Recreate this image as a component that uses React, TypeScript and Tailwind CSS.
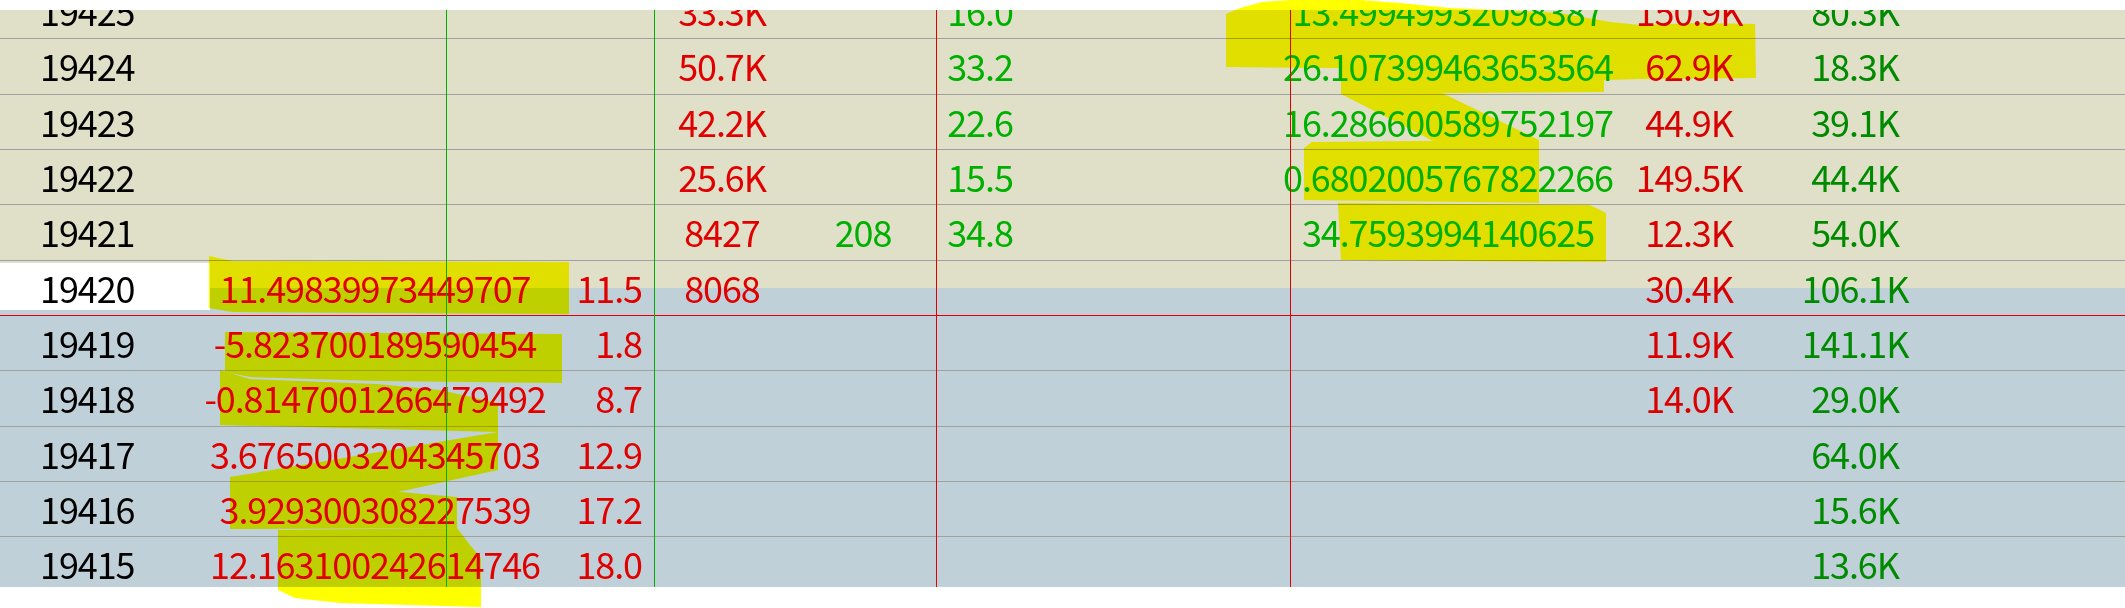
type Level = {
  n: number;
  c2?: string;
  c3?: string;
  c4?: string;
  c5?: string;
  c6?: string;
  c7?: string;
  c8?: string;
  c9?: string;
};

const LEVELS: Level[] = [
  { n: 19425, c4: "33.3K", c6: "16.0", c7: "13.49949932098387", c8: "150.9K", c9: "80.3K" },
  { n: 19424, c4: "50.7K", c6: "33.2", c7: "26.107399463653564", c8: "62.9K", c9: "18.3K" },
  { n: 19423, c4: "42.2K", c6: "22.6", c7: "16.286600589752197", c8: "44.9K", c9: "39.1K" },
  { n: 19422, c4: "25.6K", c6: "15.5", c7: "0.6802005767822266", c8: "149.5K", c9: "44.4K" },
  { n: 19421, c4: "8427", c5: "208", c6: "34.8", c7: "34.7593994140625", c8: "12.3K", c9: "54.0K" },
  { n: 19420, c2: "11.49839973449707", c3: "11.5", c4: "8068", c8: "30.4K", c9: "106.1K" },
  { n: 19419, c2: "-5.823700189590454", c3: "1.8", c8: "11.9K", c9: "141.1K" },
  { n: 19418, c2: "-0.8147001266479492", c3: "8.7", c8: "14.0K", c9: "29.0K" },
  { n: 19417, c2: "3.6765003204345703", c3: "12.9", c9: "64.0K" },
  { n: 19416, c2: "3.929300308227539", c3: "17.2", c9: "15.6K" },
  { n: 19415, c2: "12.163100242614746", c3: "18.0", c9: "13.6K" },
];

const CURRENT = 19420;

// freehand highlighter marks laid over the screenshot
const MARKS = [
  "1226,14 1240,8 1262,2 1290,0 1360,0 1400,3 1450,8 1560,13 1610,22 1640,25 1700,23 1755,24 1756,78 1640,79 1604,80 1604,92 1341,94 1341,68 1226,67",
  "1341,44 1539,140 1539,195 1341,94",
  "1304,148 1312,142 1539,140 1539,203 1304,200",
  "1338,203 1590,205 1606,213 1606,262 1341,260",
  "209,256 232,261 569,262 569,314 232,312 209,308",
  "225,332 562,334 562,383 377,381 250,377 225,372",
  "220,370 250,379 377,384 440,390 498,403 498,432 220,425",
  "498,432 498,470 230,529 230,477",
  "230,477 457,497 457,528 230,529",
  "278,530 457,528 470,545 481,558 481,607 340,603 295,598 278,590",
];

function Cell({ children, align = "center", className = "" }: { children?: string; align?: "center" | "left" | "right"; className?: string }) {
  const justify = align === "left" ? "justify-start" : align === "right" ? "justify-end" : "justify-center";
  return (
    <div className={`flex ${justify} whitespace-nowrap pt-[8px] leading-[37px] ${className}`}>
      {children}
    </div>
  );
}

function LevelRow({ level }: { level: Level }) {
  const isCurrent = level.n === CURRENT;
  const bg =
    level.n > CURRENT
      ? "bg-[#e0dfc8]"
      : isCurrent
        ? "bg-[linear-gradient(to_bottom,#e0dfc8_27px,#bfd0d8_27px)]"
        : "bg-[#bfd0d8]";
  const line = isCurrent ? "border-[#e00000]" : "border-[#a0a0a0]";

  return (
    <div
      className={`grid grid-cols-[210px_330px_114px_136px_146px_88px_260px_328px_154px_178px_1fr] h-[55.333px] shrink-0 border-b ${line} ${bg}`}
    >
      {isCurrent ? (
        <div className="flex whitespace-nowrap bg-white mt-[2px] mb-[5px] pl-[40px] pt-[6px] leading-[37px] text-black">
          {String(level.n)}
        </div>
      ) : (
        <Cell align="left" className="pl-[40px] text-black">
          {String(level.n)}
        </Cell>
      )}
      <Cell className="text-[#e00000]">{level.c2}</Cell>
      <Cell align="right" className="pr-[12px] text-[#e00000]">
        {level.c3}
      </Cell>
      <Cell className="text-[#e00000]">{level.c4}</Cell>
      <Cell className="text-[#00b000]">{level.c5}</Cell>
      <Cell className="text-[#00b000]">{level.c6}</Cell>
      <div />
      <Cell className="text-[#00b000]">{level.c7}</Cell>
      <Cell className="text-[#d80000]">{level.c8}</Cell>
      <Cell className="text-[#008a00]">{level.c9}</Cell>
      <div />
    </div>
  );
}

export default function App() {
  return (
    <div className="relative w-[2125px] h-[608px] overflow-hidden bg-white font-['Noto_Sans_CJK_SC','Liberation_Sans',sans-serif] text-[36px] tracking-[-1.1px]">
      <div className="h-[10px]" />
      <div className="relative h-[577px] overflow-hidden">
        <div className="flex flex-col -mt-[26px]">
          {LEVELS.map((level) => (
            <LevelRow key={level.n} level={level} />
          ))}
        </div>

        <div className="absolute inset-0 flex pointer-events-none">
          <div className="w-[447px] shrink-0 border-r border-[#00b000]" />
          <div className="w-[208px] shrink-0 border-r border-[#00b000]" />
          <div className="w-[282px] shrink-0 border-r border-[#e00000]" />
          <div className="w-[354px] shrink-0 border-r border-[#e00000]" />
        </div>
      </div>

      <svg
        className="absolute inset-0 pointer-events-none mix-blend-multiply"
        width={2125}
        height={608}
        viewBox="0 0 2125 608"
      >
        {MARKS.map((pts, i) => (
          <polygon key={i} points={pts} fill="#ffff00" />
        ))}
      </svg>
    </div>
  );
}
